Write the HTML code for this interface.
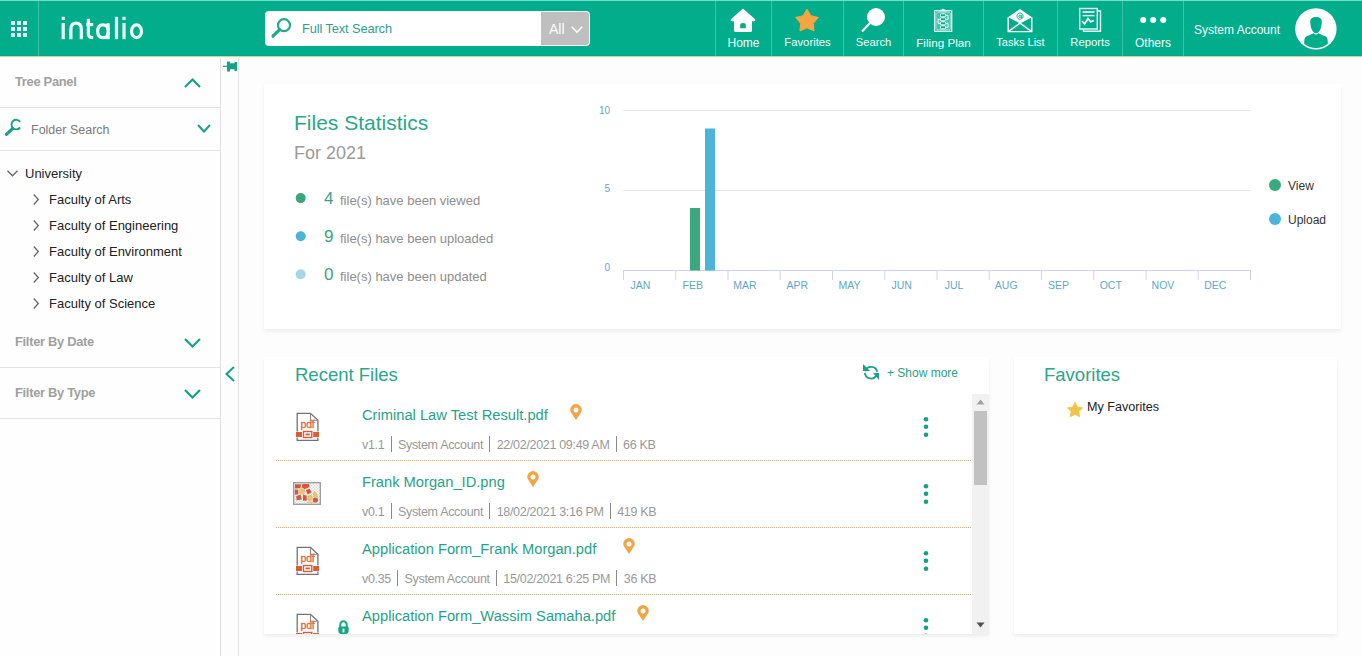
<!DOCTYPE html>
<html><head><meta charset="utf-8">
<style>
*{box-sizing:border-box;margin:0;padding:0}
html,body{width:1362px;height:656px;overflow:hidden;background:#fdfdfd;font-family:"Liberation Sans",sans-serif}
.abs{position:absolute}
svg{position:absolute;overflow:visible}
#hdr{position:absolute;left:0;top:0;width:1362px;height:56px;background:#01ad8b;border-bottom:1px solid #0fa284}
#hdrtop{position:absolute;left:0;top:0;width:1362px;height:1px;background:#74dcc9}
#hdrline{position:absolute;z-index:5;left:0;top:56px;width:1362px;height:1px;background:#c4d6ab}#hdrline2{position:absolute;z-index:5;left:0;top:57px;width:1362px;height:1px;background:#fdf8e6}
.vsep{position:absolute;top:1px;width:1px;height:55px;background:#3ec3aa}
.nav{position:absolute;top:0;height:56px;color:#f4fffc;font-size:12px;text-align:center}
.nav .lbl{position:absolute;top:36px;left:0;right:0;white-space:nowrap}
#side{position:absolute;left:0;top:57px;width:221px;height:599px;background:#fefefe;border-right:1px solid #e2e2e2}
.hline{position:absolute;left:0;width:220px;height:1px;background:#e4e4e4}
.stitle{position:absolute;left:15px;font-size:12.9px;letter-spacing:-0.3px;margin-top:0.5px;font-weight:bold;color:#a0a0a0;white-space:nowrap}
.tree{position:absolute;font-size:13px;color:#222;white-space:nowrap;line-height:15px}
#strip{position:absolute;left:221px;top:57px;width:18px;height:599px;background:#fdfdfd;border-right:1px solid #e2e2e2}
.card{position:absolute;background:#fff;box-shadow:0 2px 3px rgba(0,0,0,0.045),0 4px 6px rgba(0,0,0,0.025),0 0 2px rgba(0,0,0,0.02)}
.t{position:absolute;white-space:nowrap;line-height:1}
.num{left:324px;font-size:17px;color:#3aa287}
.stt{left:340px;font-size:13px;color:#8e8e8e}
.ylab{width:20px;text-align:right;font-size:10px;color:#5ea7cc}
.mlab{width:40px;text-align:center;top:279.9px;font-size:10.5px;color:#5ea7cc}
.fname{left:98px;font-size:14.7px;color:#1fa38a}
.meta{left:98px;font-size:12.5px;letter-spacing:-0.32px;color:#999;display:flex;align-items:flex-start}
.meta i{display:inline-block;width:1px;height:15.8px;background:#8a8a8a;margin:-3px 6.3px 0 6.3px}
.dots{position:absolute;left:12px;width:695px;height:1px;background:repeating-linear-gradient(90deg,#ddb07c 0 1px,#fcf7ef 1px 2px)}
</style></head>
<body>
<div id="hdr">
  <div id="hdrtop"></div>
  <svg style="left:11px;top:21px" width="16" height="16" viewBox="0 0 16 16" fill="#e6fbff">
    <rect x="0" y="0" width="4" height="4"/><rect x="6" y="0" width="4" height="4"/><rect x="12" y="0" width="4" height="4"/>
    <rect x="0" y="6" width="4" height="4"/><rect x="6" y="6" width="4" height="4"/><rect x="12" y="6" width="4" height="4"/>
    <rect x="0" y="12" width="4" height="4"/><rect x="6" y="12" width="4" height="4"/><rect x="12" y="12" width="4" height="4"/>
  </svg>
  <div class="vsep" style="left:38px"></div>
  <!-- logo -->
  <svg style="left:0;top:0" width="160" height="56" viewBox="0 0 160 56" fill="none" stroke="#f0fdf9" stroke-width="3.2">
    <line x1="63.2" y1="23" x2="63.2" y2="39.2"/><line x1="63.2" y1="16.8" x2="63.2" y2="20"/>
    <path d="M70.9 39.2 V29.5 Q70.9 23.2 76.1 23.2 Q81.3 23.2 81.3 29.5 V39.2"/>
    <path d="M88.4 18.8 V34 Q88.4 37.7 93.2 37.7"/><line x1="86.3" y1="24.6" x2="93.2" y2="24.6"/>
    <path d="M108.1 23.2 V39.2"/><path d="M108.1 30 Q108.1 24.8 102.9 24.8 Q97.7 24.8 97.7 31.2 Q97.7 37.6 102.9 37.6 Q108.1 37.6 108.1 32.4"/>
    <path d="M116.5 16.8 V39.2"/>
    <line x1="124" y1="23" x2="124" y2="39.2"/><line x1="124" y1="16.8" x2="124" y2="20"/>
    <ellipse cx="136.5" cy="31.2" rx="5" ry="6.4"/>
  </svg>
  <!-- search -->
  <div class="abs" style="left:265px;top:11px;width:325px;height:35px;background:#fff;border-radius:4px;overflow:hidden">
    <svg style="left:5px;top:6px" width="22" height="22" viewBox="0 0 22 22">
      <circle cx="14" cy="8.2" r="6" fill="none" stroke="#1fa88b" stroke-width="2.2"/>
      <line x1="9.6" y1="12.6" x2="3" y2="19.2" stroke="#1fa88b" stroke-width="3.2" stroke-linecap="round"/>
    </svg>
    <div class="t" style="left:37px;top:11.5px;font-size:12.8px;letter-spacing:-0.1px;color:#2ba28c">Full Text Search</div>
    <div class="abs" style="left:276px;top:1px;width:48px;height:33px;background:#c0bfbf;border-radius:0 3px 3px 0">
      <div class="t" style="left:8px;top:10px;color:#fbfbfb;font-size:14px">All</div>
      <svg style="left:30px;top:14px" width="13" height="8" viewBox="0 0 13 8"><polyline points="0.8,0.8 6,6.2 11.2,0.8" fill="none" stroke="#fff" stroke-width="1.5"/></svg>
    </div>
  </div>
  <div class="vsep" style="left:715px"></div>
  <div class="vsep" style="left:771px"></div>
  <div class="vsep" style="left:843px"></div>
  <div class="vsep" style="left:903px"></div>
  <div class="vsep" style="left:983px"></div>
  <div class="vsep" style="left:1057px"></div>
  <div class="vsep" style="left:1122px"></div>
  <div class="vsep" style="left:1183px"></div>
  <!-- Home icon -->
  <svg style="left:730px;top:8px" width="26" height="24" viewBox="0 0 26 24">
    <path d="M13 0.5 L25.2 11.2 Q25.8 12.8 24 13.2 L22 13.2 V22.5 Q22 24 20.5 24 H5.5 Q4 24 4 22.5 V13.2 L2 13.2 Q0.2 12.8 0.8 11.2 Z" fill="#fff"/>
    <path d="M10.2 20.3 V17.4 Q10.2 15 13 15 Q15.8 15 15.8 17.4 V20.3 Z" fill="#01ad8b"/>
  </svg>
  <!-- star -->
  <svg style="left:795px;top:8px" width="24" height="24" viewBox="0 0 24 24">
    <polygon points="12.00,1.20 15.94,7.78 23.41,9.49 18.37,15.27 19.05,22.91 12.00,19.90 4.95,22.91 5.63,15.27 0.59,9.49 8.06,7.78" fill="#f6a541" stroke="#f6a541" stroke-width="1" stroke-linejoin="round"/>
  </svg>
  <!-- search -->
  <svg style="left:858px;top:6px" width="28" height="28" viewBox="0 0 28 28">
    <circle cx="18" cy="11" r="9" fill="#fff"/>
    <line x1="12" y1="17" x2="4" y2="25.5" stroke="#fff" stroke-width="2.2"/>
  </svg>
  <!-- filing plan -->
  <svg style="left:928px;top:4px" width="30" height="30" viewBox="0 0 30 30">
    <rect x="6.6" y="6.7" width="17.2" height="20.6" fill="rgba(255,255,255,0.28)" stroke="#f0fffb" stroke-width="1.1"/>
    <rect x="8" y="8.2" width="14.4" height="17.6" fill="none" stroke="rgba(255,255,255,0.55)" stroke-width="0.7"/>
    <path d="M10.6 7.2 Q11.5 5.4 13.8 5.4 Q15 3.9 16.4 5.4 Q18.7 5.4 19.6 7.2 Z" fill="#f0fffb"/>
    <g fill="#01ad8b" stroke="#f0fffb" stroke-width="1">
      <rect x="12.4" y="9.8" width="5.2" height="3" rx="1"/>
      <rect x="12.4" y="13.8" width="5.2" height="3" rx="1"/>
      <rect x="12.4" y="17.8" width="5.2" height="3" rx="1"/>
      <rect x="12.4" y="21.8" width="5.2" height="3" rx="1"/>
    </g>
    <path d="M12.4 15.3 H10.1 V19.3 H12.4 M17.6 11.3 H20.1 V15.3 H17.6 M17.6 19.3 H20.1 V23.3 H17.6" fill="none" stroke="#f0fffb" stroke-width="1"/>
    <g fill="#1a7f6c"><circle cx="7.9" cy="8" r="0.55"/><circle cx="22.5" cy="8" r="0.55"/><circle cx="7.9" cy="26" r="0.55"/><circle cx="22.5" cy="26" r="0.55"/></g>
  </svg>
  <!-- tasks envelope -->
  <svg style="left:1007px;top:8px" width="26" height="25" viewBox="0 0 26 25">
    <path d="M1 9.2 L13 1 L25 9.2 L13 15.4 Z" fill="#fff"/>
    <path d="M15.1 10.4 A3.1 3.1 0 1 1 16.1 8.3 V9 Q16.1 10.2 15.1 10.1 Q14.3 10 14.3 9 V6.9" fill="none" stroke="#01ad8b" stroke-width="0.9"/>
    <circle cx="13" cy="8.3" r="1.2" fill="none" stroke="#01ad8b" stroke-width="0.9"/>
    <path d="M1.2 9.2 V23.6 H24.8 V9.2 M1.2 23.6 L13 15.2 L24.8 23.6" fill="none" stroke="#fff" stroke-width="1.4"/>
  </svg>
  <!-- reports -->
  <svg style="left:1078px;top:7px" width="25" height="26" viewBox="0 0 25 26" fill="none" stroke="#e9fff9" stroke-width="1.4">
    <path d="M19.5 4 H22.5 V24.3 H5.5 V22"/>
    <rect x="1.7" y="1.5" width="17.6" height="20.5"/>
    <line x1="4.5" y1="5" x2="16.5" y2="5" stroke-width="1.6"/>
    <line x1="4.5" y1="8.6" x2="16.5" y2="8.6" stroke-width="1.4"/>
    <polyline points="4,14 6.6,17 10,11.5 12.6,14.8 15.8,13.6" stroke-width="1.7"/>
  </svg>
  <!-- others dots -->
  <svg style="left:1140px;top:16px" width="27" height="8" viewBox="0 0 27 8" fill="#fff">
    <circle cx="3.2" cy="4" r="3"/><circle cx="13.2" cy="4" r="3"/><circle cx="23.2" cy="4" r="3"/>
  </svg>
  <div class="nav" style="left:716px;width:55px"><div class="lbl">Home</div></div>
  <div class="nav" style="left:772px;width:71px"><div class="lbl" style="font-size:11.3px">Favorites</div></div>
  <div class="nav" style="left:844px;width:59px"><div class="lbl" style="font-size:11.2px">Search</div></div>
  <div class="nav" style="left:904px;width:79px"><div class="lbl" style="font-size:11.7px">Filing Plan</div></div>
  <div class="nav" style="left:984px;width:73px"><div class="lbl" style="font-size:11px">Tasks List</div></div>
  <div class="nav" style="left:1058px;width:64px"><div class="lbl" style="font-size:11.3px">Reports</div></div>
  <div class="nav" style="left:1123px;width:60px"><div class="lbl">Others</div></div>
  <div class="t" style="left:1194px;top:24px;color:#f4fffc;font-size:12px">System Account</div>
  <!-- avatar -->
  <svg style="left:1295px;top:8px" width="42" height="42" viewBox="0 0 42 42">
    <circle cx="20.9" cy="20.9" r="20.7" fill="#fff"/>
    <path d="M15.2 14 Q15.2 9 21 9 Q26.8 9 26.8 14 Q26.8 19.5 24.5 23 Q23 25.2 21 25.2 Q19 25.2 17.5 23 Q15.2 19.5 15.2 14 Z" fill="#01ad8b"/>
    <path d="M18.3 25.2 Q16.2 26.6 11.5 28.2 Q9.8 29 9.4 31.5 L9.1 35.8 A19 19 0 0 0 32.9 35.8 L32.6 31.5 Q32.2 29 30.5 28.2 Q25.8 26.6 23.7 25.2 Q22.5 26.4 21 26.4 Q19.5 26.4 18.3 25.2 Z" fill="#01ad8b"/>
  </svg>
</div>
<div id="hdrline"></div><div id="hdrline2"></div>

<div id="side">
  <div class="stitle" style="top:16.5px">Tree Panel</div>
  <svg style="left:184px;top:21px" width="17" height="10" viewBox="0 0 17 10"><polyline points="1,9 8.5,1.5 16,9" fill="none" stroke="#17a287" stroke-width="2.2"/></svg>
  <div class="hline" style="top:50px"></div>
  <svg style="left:4px;top:62px" width="18" height="19" viewBox="0 0 18 19">
    <path d="M16.2 2.85 A4.8 4.8 0 1 0 16.2 8.35" fill="none" stroke="#17a287" stroke-width="1.9"/>
    <line x1="8.6" y1="9.6" x2="2.4" y2="15.4" stroke="#17a287" stroke-width="3.2" stroke-linecap="round"/>
  </svg>
  <div class="t" style="left:31px;top:66.5px;font-size:12.5px;color:#7a7a7a">Folder Search</div>
  <svg style="left:197px;top:67px" width="14" height="9" viewBox="0 0 14 9"><polyline points="1,1 7,7.5 13,1" fill="none" stroke="#17a287" stroke-width="2"/></svg>
  <div class="hline" style="top:93px"></div>
  <svg style="left:7px;top:113px" width="11" height="7" viewBox="0 0 11 7"><polyline points="0.5,0.8 5.5,5.8 10.5,0.8" fill="none" stroke="#666" stroke-width="1.3"/></svg>
  <div class="tree" style="left:25px;top:109px">University</div>
  <svg style="left:33px;top:137px" width="6" height="11" viewBox="0 0 6 11"><polyline points="0.8,0.5 5.3,5.5 0.8,10.5" fill="none" stroke="#666" stroke-width="1.3"/></svg>
  <div class="tree" style="left:49px;top:135px">Faculty of Arts</div>
  <svg style="left:33px;top:163px" width="6" height="11" viewBox="0 0 6 11"><polyline points="0.8,0.5 5.3,5.5 0.8,10.5" fill="none" stroke="#666" stroke-width="1.3"/></svg>
  <div class="tree" style="left:49px;top:161px">Faculty of Engineering</div>
  <svg style="left:33px;top:189px" width="6" height="11" viewBox="0 0 6 11"><polyline points="0.8,0.5 5.3,5.5 0.8,10.5" fill="none" stroke="#666" stroke-width="1.3"/></svg>
  <div class="tree" style="left:49px;top:187px">Faculty of Environment</div>
  <svg style="left:33px;top:215px" width="6" height="11" viewBox="0 0 6 11"><polyline points="0.8,0.5 5.3,5.5 0.8,10.5" fill="none" stroke="#666" stroke-width="1.3"/></svg>
  <div class="tree" style="left:49px;top:213px">Faculty of Law</div>
  <svg style="left:33px;top:241px" width="6" height="11" viewBox="0 0 6 11"><polyline points="0.8,0.5 5.3,5.5 0.8,10.5" fill="none" stroke="#666" stroke-width="1.3"/></svg>
  <div class="tree" style="left:49px;top:239px">Faculty of Science</div>
  <div class="stitle" style="top:276.5px">Filter By Date</div>
  <svg style="left:184px;top:281px" width="17" height="10" viewBox="0 0 17 10"><polyline points="1,1 8.5,8.5 16,1" fill="none" stroke="#17a287" stroke-width="2.2"/></svg>
  <div class="hline" style="top:310px"></div>
  <div class="stitle" style="top:327.5px">Filter By Type</div>
  <svg style="left:184px;top:332px" width="17" height="10" viewBox="0 0 17 10"><polyline points="1,1 8.5,8.5 16,1" fill="none" stroke="#17a287" stroke-width="2.2"/></svg>
  <div class="hline" style="top:361px"></div>
</div>
<div id="strip">
  <svg style="left:2px;top:4px" width="15" height="11" viewBox="0 0 15 11">
    <line x1="0" y1="5.3" x2="5" y2="5.3" stroke="#17a287" stroke-width="1.2"/>
    <rect x="4" y="0.5" width="3" height="10" fill="#17a287"/>
    <rect x="6" y="2.3" width="6" height="6" fill="#17a287"/>
    <rect x="11.5" y="1" width="2.5" height="9" fill="#17a287"/>
  </svg>
  <svg style="left:4px;top:309px" width="10" height="16" viewBox="0 0 10 16"><polyline points="9,1 1.5,8 9,15" fill="none" stroke="#17a287" stroke-width="2"/></svg>
</div>

<!-- CARDS -->
<div class="card" style="left:264px;top:84px;width:1077px;height:245px"></div>
<div class="card" style="left:264px;top:357px;width:725px;height:277px"></div>
<div class="card" style="left:1014px;top:357px;width:323px;height:277px"></div>

<!-- stats -->
<div class="t" style="left:294px;top:112px;font-size:21px;color:#2aa78b">Files Statistics</div>
<div class="t" style="left:294px;top:143.8px;font-size:18px;color:#9a9a9a">For 2021</div>
<svg style="left:0;top:0" width="400" height="300" viewBox="0 0 400 300">
  <circle cx="300.7" cy="198.1" r="5" fill="#3aa57f"/>
  <circle cx="300.7" cy="236.2" r="5" fill="#4ab3d6"/>
  <circle cx="300.7" cy="274.2" r="5" fill="#a6d6ec"/>
</svg>
<div class="t num" style="top:190.4px">4</div>
<div class="t stt" style="top:194px">file(s) have been viewed</div>
<div class="t num" style="top:228.4px">9</div>
<div class="t stt" style="top:232px">file(s) have been uploaded</div>
<div class="t num" style="top:266.4px">0</div>
<div class="t stt" style="top:270px">file(s) have been updated</div>

<!-- chart -->
<svg style="left:0;top:0" width="1362" height="656" viewBox="0 0 1362 656">
  <line x1="623" y1="110.5" x2="1250" y2="110.5" stroke="#e6e6ea" stroke-width="1"/>
  <line x1="623" y1="190.5" x2="1250" y2="190.5" stroke="#e6e6ea" stroke-width="1"/>
  <line x1="623" y1="270.5" x2="1251" y2="270.5" stroke="#ccd6eb" stroke-width="1"/>
  <g stroke="#ccd6eb" stroke-width="1"><line x1="623.50" y1="271" x2="623.50" y2="280"/><line x1="675.75" y1="271" x2="675.75" y2="280"/><line x1="728.00" y1="271" x2="728.00" y2="280"/><line x1="780.25" y1="271" x2="780.25" y2="280"/><line x1="832.50" y1="271" x2="832.50" y2="280"/><line x1="884.75" y1="271" x2="884.75" y2="280"/><line x1="937.00" y1="271" x2="937.00" y2="280"/><line x1="989.25" y1="271" x2="989.25" y2="280"/><line x1="1041.50" y1="271" x2="1041.50" y2="280"/><line x1="1093.75" y1="271" x2="1093.75" y2="280"/><line x1="1146.00" y1="271" x2="1146.00" y2="280"/><line x1="1198.25" y1="271" x2="1198.25" y2="280"/><line x1="1250.50" y1="271" x2="1250.50" y2="280"/></g>
  <rect x="690" y="208" width="10" height="62.5" fill="#3aa881"/>
  <rect x="705" y="128.5" width="10" height="142" fill="#4ab5d9"/>
  <circle cx="1275" cy="185" r="6" fill="#3aa881"/>
  <circle cx="1275" cy="219" r="6" fill="#4ab5d9"/>
</svg>
<div class="t ylab" style="left:590px;top:106px">10</div>
<div class="t ylab" style="left:590px;top:184px">5</div>
<div class="t ylab" style="left:590px;top:262.5px">0</div>
<div class="t mlab" style="left:620.50px">JAN</div><div class="t mlab" style="left:672.75px">FEB</div><div class="t mlab" style="left:725.00px">MAR</div><div class="t mlab" style="left:777.25px">APR</div><div class="t mlab" style="left:829.50px">MAY</div><div class="t mlab" style="left:881.75px">JUN</div><div class="t mlab" style="left:934.00px">JUL</div><div class="t mlab" style="left:986.25px">AUG</div><div class="t mlab" style="left:1038.50px">SEP</div><div class="t mlab" style="left:1090.75px">OCT</div><div class="t mlab" style="left:1143.00px">NOV</div><div class="t mlab" style="left:1195.25px">DEC</div>
<div class="t" style="left:1288px;top:179.5px;font-size:12px;color:#333">View</div>
<div class="t" style="left:1288px;top:214.3px;font-size:12px;color:#333">Upload</div>

<!-- recent files -->
<div class="t" style="left:295px;top:366.2px;font-size:18.5px;color:#2aa78b">Recent Files</div>
<svg style="left:862px;top:363px" width="18" height="18" viewBox="0 0 18 18" fill="none" stroke="#17a287" stroke-width="1.8">
  <path d="M3.2 8.2 A6.2 6.2 0 0 1 15.2 8.9"/><path d="M2.9 9.9 A6.2 6.2 0 0 0 14.6 12.2"/>
  <path d="M1 1 L1 8 L8 8 Z" fill="#17a287" stroke="none"/>
  <path d="M17 10 L17 17 L11 10 Z" fill="#17a287" stroke="none"/>
</svg>
<div class="t" style="left:887px;top:366.7px;font-size:12px;color:#27a38a">+ Show more</div>
<div class="abs" style="left:264px;top:394px;width:725px;height:240px;overflow:hidden">
<svg style="left:31px;top:18px" width="25" height="29" viewBox="0 0 25 29">
  <path d="M2.2 19.5 V1.3 H15.5 L22.9 8.2 V19.5 M22.9 25.5 V28.4 H2.2 V25.5" fill="none" stroke="#737373" stroke-width="1.3"/>
  <path d="M15.5 1.3 V8.2 H22.9" fill="none" stroke="#8a8a8a" stroke-width="1.1"/>
  <text x="12.6" y="16.4" text-anchor="middle" font-family="Liberation Sans" font-size="10.5" fill="#dc6c48" stroke="#dc6c48" stroke-width="0.35" letter-spacing="-0.2">pdf</text>
  <rect x="1" y="20" width="6" height="5" fill="#dc5b35"/><rect x="18.2" y="20" width="5.8" height="5" fill="#dc5b35"/>
  <rect x="8.5" y="19.5" width="8.3" height="6" fill="none" stroke="#dc5b35" stroke-width="1.4"/>
  <rect x="10.6" y="21.5" width="4.2" height="1.8" fill="#dc5b35"/>
</svg><div class="t fname" style="top:13.7px">Criminal Law Test Result.pdf</div>
<svg style="left:306px;top:10px" width="12" height="16" viewBox="0 0 12 16"><path d="M6 16 L1.7 9.6 Q0.2 7.5 0.2 5.9 A5.8 5.8 0 0 1 11.8 5.9 Q11.8 7.5 10.3 9.6 Z" fill="#f5a445"/><circle cx="6" cy="6" r="2.5" fill="#fff"/></svg>
<div class="t meta" style="top:44.9px"><span>v1.1</span><i></i><span>System Account</span><i></i><span>22/02/2021 09:49 AM</span><i></i><span>66 KB</span></div>
<svg style="left:659px;top:23px" width="6" height="20" viewBox="0 0 6 20" fill="#12a087"><circle cx="3" cy="2.3" r="2.3"/><circle cx="3" cy="9.8" r="2.3"/><circle cx="3" cy="17.7" r="2.3"/></svg>
<div class="dots" style="top:66px"></div>
<svg style="left:29px;top:88px" width="28" height="23" viewBox="0 0 28 23">
  <defs><pattern id="chk" width="3" height="3" patternUnits="userSpaceOnUse"><rect width="1.5" height="1.5" fill="#dedede"/><rect x="1.5" y="1.5" width="1.5" height="1.5" fill="#dedede"/></pattern></defs>
  <rect x="0.7" y="0.7" width="26.6" height="21.6" fill="url(#chk)" stroke="#9a9a9a" stroke-width="1.3"/>
  <g fill="#d8553a">
    <path d="M2 2.2 H8 L7.5 6.2 L2 6.5 Z"/><path d="M9.3 2 H16 L16.6 5 L11.5 7.2 L9 5.5 Z"/>
    <path d="M1.8 7.5 L5.2 7.8 L5.4 12.2 L1.8 12.8 Z"/><path d="M12.8 8 L16.8 6.8 L18.6 10.5 L14.5 12.6 Z"/>
    <path d="M3.2 14 L7.6 12.4 L8.8 17.6 L3.6 18.2 Z"/><path d="M10 12.5 L13.6 13.4 L13.8 18.4 L10 18.8 Z"/>
    <circle cx="22.4" cy="18" r="2.6"/>
  </g>
  <g fill="#e9c27a">
    <circle cx="9" cy="9.4" r="3.1"/><path d="M15 13.6 L19 12.6 L20 17.2 L16.5 19.8 L14.2 17.4 Z"/>
    <path d="M21.5 8.5 L24 11.5 L25.4 15.6 L21 15.8 L19.6 11.5 Z"/><rect x="14.6" y="19.6" width="5.4" height="1.6"/>
  </g>
</svg><div class="t fname" style="top:80.7px">Frank Morgan_ID.png</div>
<svg style="left:263px;top:77px" width="12" height="16" viewBox="0 0 12 16"><path d="M6 16 L1.7 9.6 Q0.2 7.5 0.2 5.9 A5.8 5.8 0 0 1 11.8 5.9 Q11.8 7.5 10.3 9.6 Z" fill="#f5a445"/><circle cx="6" cy="6" r="2.5" fill="#fff"/></svg>
<div class="t meta" style="top:111.9px"><span>v0.1</span><i></i><span>System Account</span><i></i><span>18/02/2021 3:16 PM</span><i></i><span>419 KB</span></div>
<svg style="left:659px;top:90px" width="6" height="20" viewBox="0 0 6 20" fill="#12a087"><circle cx="3" cy="2.3" r="2.3"/><circle cx="3" cy="9.8" r="2.3"/><circle cx="3" cy="17.7" r="2.3"/></svg>
<div class="dots" style="top:133px"></div>
<svg style="left:31px;top:152px" width="25" height="29" viewBox="0 0 25 29">
  <path d="M2.2 19.5 V1.3 H15.5 L22.9 8.2 V19.5 M22.9 25.5 V28.4 H2.2 V25.5" fill="none" stroke="#737373" stroke-width="1.3"/>
  <path d="M15.5 1.3 V8.2 H22.9" fill="none" stroke="#8a8a8a" stroke-width="1.1"/>
  <text x="12.6" y="16.4" text-anchor="middle" font-family="Liberation Sans" font-size="10.5" fill="#dc6c48" stroke="#dc6c48" stroke-width="0.35" letter-spacing="-0.2">pdf</text>
  <rect x="1" y="20" width="6" height="5" fill="#dc5b35"/><rect x="18.2" y="20" width="5.8" height="5" fill="#dc5b35"/>
  <rect x="8.5" y="19.5" width="8.3" height="6" fill="none" stroke="#dc5b35" stroke-width="1.4"/>
  <rect x="10.6" y="21.5" width="4.2" height="1.8" fill="#dc5b35"/>
</svg><div class="t fname" style="top:147.7px">Application Form_Frank Morgan.pdf</div>
<svg style="left:359px;top:144px" width="12" height="16" viewBox="0 0 12 16"><path d="M6 16 L1.7 9.6 Q0.2 7.5 0.2 5.9 A5.8 5.8 0 0 1 11.8 5.9 Q11.8 7.5 10.3 9.6 Z" fill="#f5a445"/><circle cx="6" cy="6" r="2.5" fill="#fff"/></svg>
<div class="t meta" style="top:178.9px"><span>v0.35</span><i></i><span>System Account</span><i></i><span>15/02/2021 6:25 PM</span><i></i><span>36 KB</span></div>
<svg style="left:659px;top:157px" width="6" height="20" viewBox="0 0 6 20" fill="#12a087"><circle cx="3" cy="2.3" r="2.3"/><circle cx="3" cy="9.8" r="2.3"/><circle cx="3" cy="17.7" r="2.3"/></svg>
<div class="dots" style="top:200px"></div>
<svg style="left:31px;top:219px" width="25" height="29" viewBox="0 0 25 29">
  <path d="M2.2 19.5 V1.3 H15.5 L22.9 8.2 V19.5 M22.9 25.5 V28.4 H2.2 V25.5" fill="none" stroke="#737373" stroke-width="1.3"/>
  <path d="M15.5 1.3 V8.2 H22.9" fill="none" stroke="#8a8a8a" stroke-width="1.1"/>
  <text x="12.6" y="16.4" text-anchor="middle" font-family="Liberation Sans" font-size="10.5" fill="#dc6c48" stroke="#dc6c48" stroke-width="0.35" letter-spacing="-0.2">pdf</text>
  <rect x="1" y="20" width="6" height="5" fill="#dc5b35"/><rect x="18.2" y="20" width="5.8" height="5" fill="#dc5b35"/>
  <rect x="8.5" y="19.5" width="8.3" height="6" fill="none" stroke="#dc5b35" stroke-width="1.4"/>
  <rect x="10.6" y="21.5" width="4.2" height="1.8" fill="#dc5b35"/>
</svg><div class="t fname" style="top:214.7px">Application Form_Wassim Samaha.pdf</div>
<svg style="left:373px;top:211px" width="12" height="16" viewBox="0 0 12 16"><path d="M6 16 L1.7 9.6 Q0.2 7.5 0.2 5.9 A5.8 5.8 0 0 1 11.8 5.9 Q11.8 7.5 10.3 9.6 Z" fill="#f5a445"/><circle cx="6" cy="6" r="2.5" fill="#fff"/></svg>
<div class="t meta" style="top:245.9px"><span>v1.0</span><i></i><span>System Account</span><i></i><span>10/02/2021 1:20 PM</span><i></i><span>40 KB</span></div>
<svg style="left:659px;top:224px" width="6" height="20" viewBox="0 0 6 20" fill="#12a087"><circle cx="3" cy="2.3" r="2.3"/><circle cx="3" cy="9.8" r="2.3"/><circle cx="3" cy="17.7" r="2.3"/></svg>
<svg style="left:74px;top:226px" width="11" height="15" viewBox="0 0 11 15">
  <path d="M2.3 7 V4.6 A3.2 3.4 0 0 1 8.7 4.6 V7" fill="none" stroke="#16a585" stroke-width="2"/>
  <path d="M0.3 8 Q0.3 6.5 1.8 6.5 H9.2 Q10.7 6.5 10.7 8 V11 Q10.7 14.5 5.5 14.5 Q0.3 14.5 0.3 11 Z" fill="#16a585"/>
  <rect x="4.6" y="8.6" width="1.8" height="3.8" fill="#fff"/>
</svg>
<div class="abs" style="left:708px;top:0;width:17px;height:240px;background:#f1f1f1"></div>
<div class="abs" style="left:710px;top:17px;width:13px;height:74px;background:#c1c1c1"></div>
<svg style="left:712px;top:5px" width="9" height="6" viewBox="0 0 9 6"><path d="M0.5 5.5 L4.5 0.5 L8.5 5.5 Z" fill="#a3a3a3"/></svg>
<svg style="left:712px;top:228px" width="9" height="6" viewBox="0 0 9 6"><path d="M0.5 0.5 L4.5 5.5 L8.5 0.5 Z" fill="#505050"/></svg>
</div>

<!-- favorites -->
<div class="t" style="left:1044px;top:365.8px;font-size:18.5px;color:#2aa78b">Favorites</div>
<svg style="left:1067px;top:402px" width="16" height="16" viewBox="0 0 16 16"><polygon points="8.00,0.30 10.41,4.98 15.61,5.83 11.90,9.57 12.70,14.77 8.00,12.40 3.30,14.77 4.10,9.57 0.39,5.83 5.59,4.98" fill="#f0c64a" stroke="#f0c64a" stroke-width="0.8" stroke-linejoin="round"/></svg>
<div class="t" style="left:1087px;top:400.8px;font-size:12.6px;color:#222">My Favorites</div>
</body></html>
